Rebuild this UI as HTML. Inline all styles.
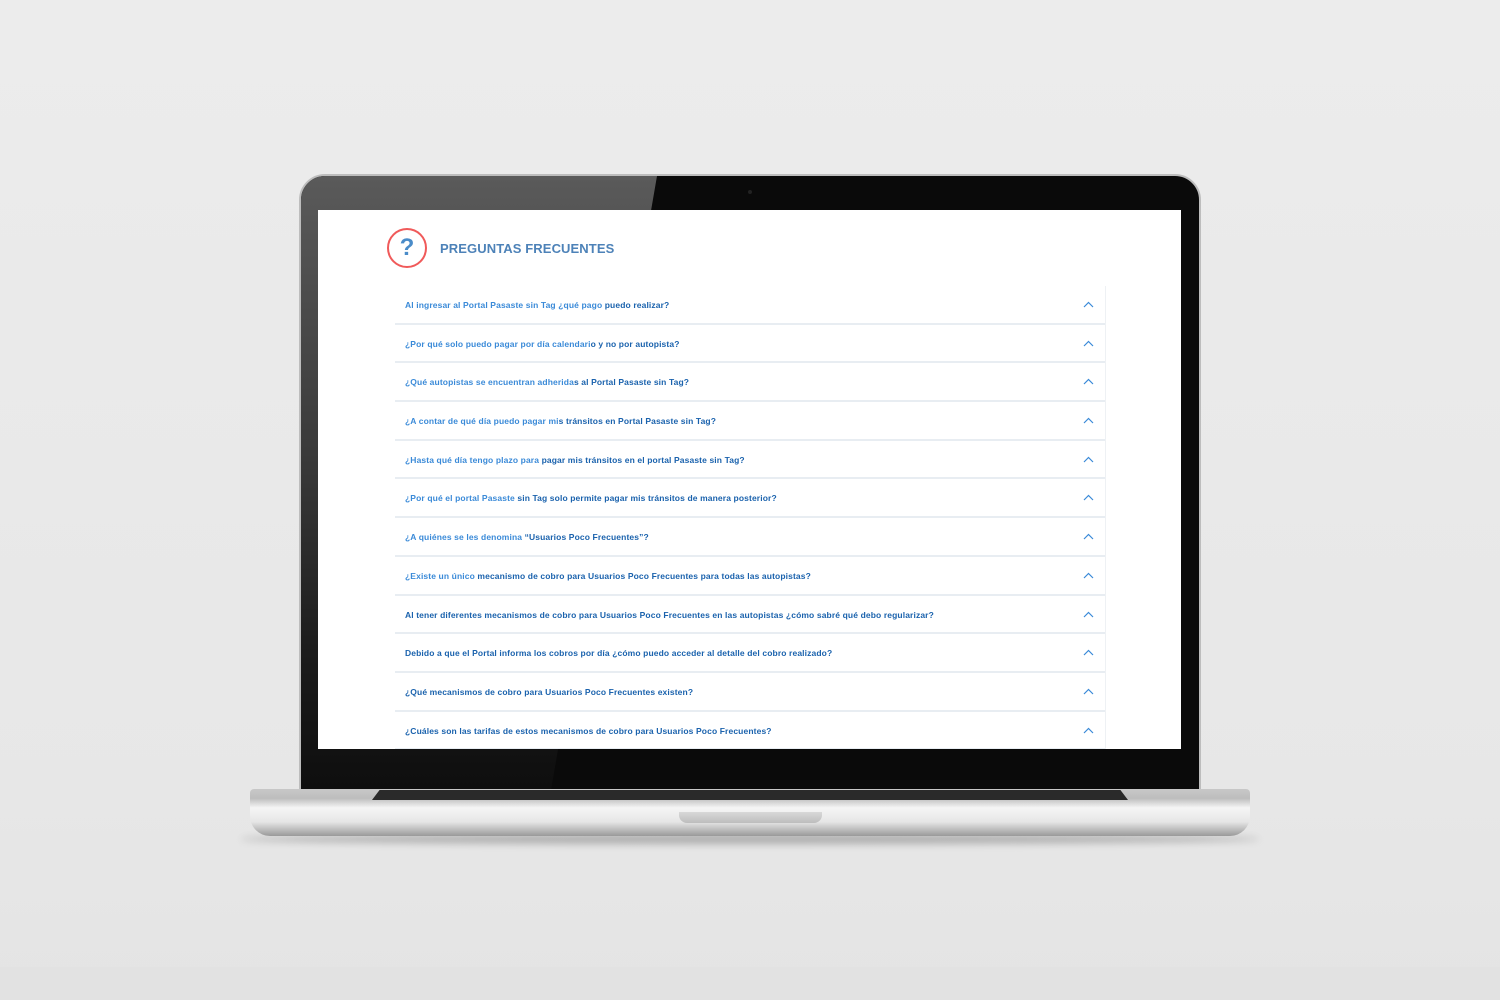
<!DOCTYPE html>
<html><head><meta charset="utf-8"><style>
*{margin:0;padding:0;box-sizing:border-box}
body{width:1500px;height:1000px;overflow:hidden;background:linear-gradient(#ececec,#e7e7e7 80%,#e4e4e4);position:relative;font-family:"Liberation Sans",sans-serif}
.floor{position:absolute;left:0;top:967px;width:1500px;height:33px;background:#e2e2e2}
.lid{position:absolute;left:299px;top:174px;width:902px;height:618px;border-radius:26px 26px 0 0;background:#0a0a0a;border:2px solid #bdbdbd;overflow:hidden}
.lid .gray{position:absolute;left:0;top:0;width:100%;height:100%;background:linear-gradient(to bottom,#5a5a5a,#3a3a3a 45%,#1a1a1a 80%,#0e0e0e);clip-path:polygon(0 0,356px 0,250px 100%,0 100%)}
.screen{position:absolute;left:318px;top:210px;width:863px;height:539px;background:#fff;overflow:hidden}
.cam{position:absolute;left:748px;top:190px;width:4px;height:4px;border-radius:50%;background:#222}
.base{position:absolute;left:250px;top:789px;width:1000px;height:47px;border-radius:4px 4px 20px 20px;background:linear-gradient(#c8c8c8,#bdbdbd 20%,#f5f5f5 40%,#e6e6e6 70%,#9a9a9a)}
.kb{position:absolute;left:372px;top:790px;width:756px;height:10px;background:#2a2a2a;clip-path:polygon(1% 0,99% 0,100% 100%,0 100%)}
.notch{position:absolute;left:679px;top:812px;width:143px;height:11px;border-radius:0 0 8px 8px;background:linear-gradient(#d8d8d8,#bdbdbd)}
.shadow{position:absolute;left:240px;top:834px;width:1020px;height:10px;border-radius:50%;background:rgba(0,0,0,.25);filter:blur(4px)}
.icon{position:absolute;left:69px;top:18px;width:40px;height:40px;border:2px solid #f05a5a;border-radius:50%;color:#4a8cc9;font-weight:bold;font-size:24px;text-align:center;line-height:36px}
.title{position:absolute;left:122px;top:31px;color:#4d82b8;font-weight:bold;font-size:13px;letter-spacing:.1px}
.list{position:absolute;left:77px;top:76px;width:711px;border-right:1px solid #eef1f4}
.row{height:38.7px;border-bottom:2px solid #e8edf2;position:relative;font-size:8.5px;letter-spacing:.12px;font-weight:bold;color:#3a8ad8;padding:14px 0 0 10px;white-space:nowrap}
.row b{color:#1a62ad}
.row svg{position:absolute;right:11px;top:15px}
</style></head><body>
<div class="floor"></div>
<div class="shadow"></div>
<div class="lid"><div class="gray"></div></div>
<div class="cam"></div>
<div class="screen">
<div class="icon">?</div>
<div class="title">PREGUNTAS FRECUENTES</div>
<div class="list">
<div class="row">Al ingresar al Portal Pasaste sin Tag ¿qué pago <b>puedo realizar?</b><svg width="11" height="7"><path d="M1 6L5.5 1.5L10 6" stroke="#3a8ad8" stroke-width="1.2" fill="none"/></svg></div>
<div class="row">¿Por qué solo puedo pagar por día calendari<b>o y no por autopista?</b><svg width="11" height="7"><path d="M1 6L5.5 1.5L10 6" stroke="#3a8ad8" stroke-width="1.2" fill="none"/></svg></div>
<div class="row">¿Qué autopistas se encuentran adherida<b>s al Portal Pasaste sin Tag?</b><svg width="11" height="7"><path d="M1 6L5.5 1.5L10 6" stroke="#3a8ad8" stroke-width="1.2" fill="none"/></svg></div>
<div class="row">¿A contar de qué día puedo pagar mi<b>s tránsitos en Portal Pasaste sin Tag?</b><svg width="11" height="7"><path d="M1 6L5.5 1.5L10 6" stroke="#3a8ad8" stroke-width="1.2" fill="none"/></svg></div>
<div class="row">¿Hasta qué día tengo plazo para <b>pagar mis tránsitos en el portal Pasaste sin Tag?</b><svg width="11" height="7"><path d="M1 6L5.5 1.5L10 6" stroke="#3a8ad8" stroke-width="1.2" fill="none"/></svg></div>
<div class="row">¿Por qué el portal Pasaste <b>sin Tag solo permite pagar mis tránsitos de manera posterior?</b><svg width="11" height="7"><path d="M1 6L5.5 1.5L10 6" stroke="#3a8ad8" stroke-width="1.2" fill="none"/></svg></div>
<div class="row">¿A quiénes se les denomina <b>“Usuarios Poco Frecuentes”?</b><svg width="11" height="7"><path d="M1 6L5.5 1.5L10 6" stroke="#3a8ad8" stroke-width="1.2" fill="none"/></svg></div>
<div class="row">¿Existe un único <b>mecanismo de cobro para Usuarios Poco Frecuentes para todas las autopistas?</b><svg width="11" height="7"><path d="M1 6L5.5 1.5L10 6" stroke="#3a8ad8" stroke-width="1.2" fill="none"/></svg></div>
<div class="row"><b>Al tener diferentes mecanismos de cobro para Usuarios Poco Frecuentes en las autopistas ¿cómo sabré qué debo regularizar?</b><svg width="11" height="7"><path d="M1 6L5.5 1.5L10 6" stroke="#3a8ad8" stroke-width="1.2" fill="none"/></svg></div>
<div class="row"><b>Debido a que el Portal informa los cobros por día ¿cómo puedo acceder al detalle del cobro realizado?</b><svg width="11" height="7"><path d="M1 6L5.5 1.5L10 6" stroke="#3a8ad8" stroke-width="1.2" fill="none"/></svg></div>
<div class="row"><b>¿Qué mecanismos de cobro para Usuarios Poco Frecuentes existen?</b><svg width="11" height="7"><path d="M1 6L5.5 1.5L10 6" stroke="#3a8ad8" stroke-width="1.2" fill="none"/></svg></div>
<div class="row"><b>¿Cuáles son las tarifas de estos mecanismos de cobro para Usuarios Poco Frecuentes?</b><svg width="11" height="7"><path d="M1 6L5.5 1.5L10 6" stroke="#3a8ad8" stroke-width="1.2" fill="none"/></svg></div>
</div>
</div>
<div class="base"></div>
<div class="kb"></div>
<div class="notch"></div>
</body></html>
